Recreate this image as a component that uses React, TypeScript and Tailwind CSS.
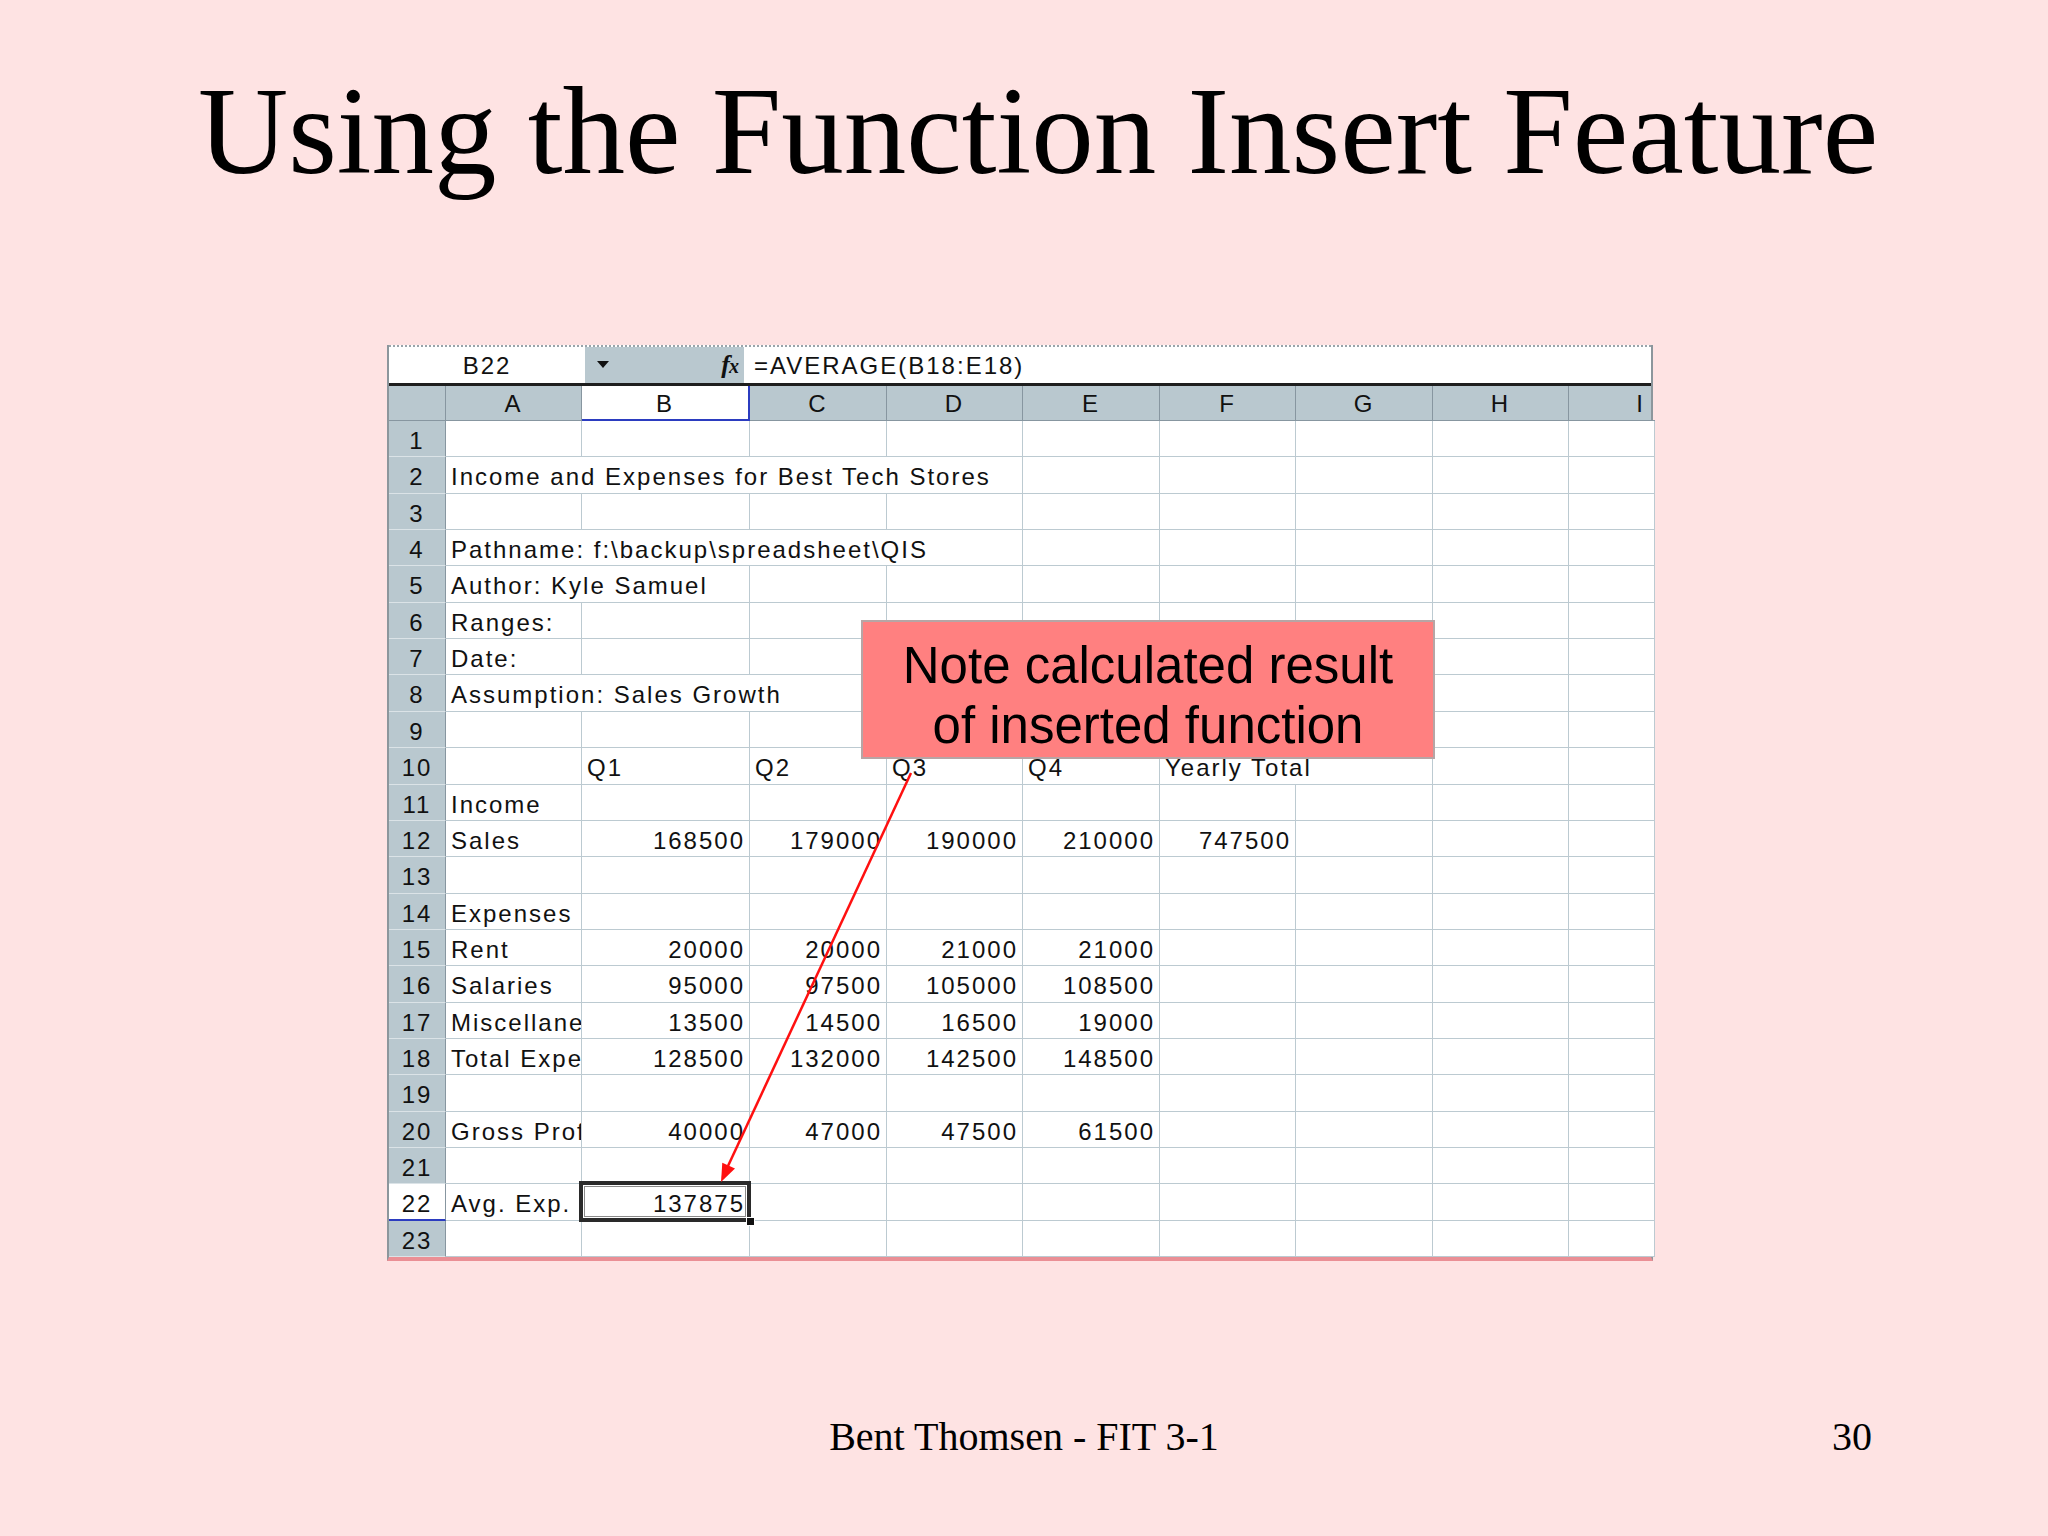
import React from "react";

type Cell = { t?: string; span?: number; num?: boolean };

const cols = ["A", "B", "C", "D", "E", "F", "G", "H", "I"];

const n = (t: string): Cell => ({ t, num: true });

// sheet contents, row number -> cells from column A
const data: Record<number, Cell[]> = {
  2: [{ t: "Income and Expenses for Best Tech Stores", span: 4 }],
  4: [{ t: "Pathname: f:\\backup\\spreadsheet\\QIS", span: 4 }],
  5: [{ t: "Author: Kyle Samuel", span: 2 }],
  6: [{ t: "Ranges:" }],
  7: [{ t: "Date:" }],
  8: [{ t: "Assumption: Sales Growth", span: 3 }],
  10: [{}, { t: "Q1" }, { t: "Q2" }, { t: "Q3" }, { t: "Q4" }, { t: "Yearly Total", span: 2 }],
  11: [{ t: "Income" }],
  12: [{ t: "Sales" }, n("168500"), n("179000"), n("190000"), n("210000"), n("747500")],
  14: [{ t: "Expenses" }],
  15: [{ t: "Rent" }, n("20000"), n("20000"), n("21000"), n("21000")],
  16: [{ t: "Salaries" }, n("95000"), n("97500"), n("105000"), n("108500")],
  17: [{ t: "Miscellaneous" }, n("13500"), n("14500"), n("16500"), n("19000")],
  18: [{ t: "Total Expenses" }, n("128500"), n("132000"), n("142500"), n("148500")],
  20: [{ t: "Gross Profit" }, n("40000"), n("47000"), n("47500"), n("61500")],
  22: [{ t: "Avg. Exp." }, n("137875")],
};

function fillRow(cells: Cell[] = []): Cell[] {
  const out = [...cells];
  let used = out.reduce((s, c) => s + (c.span ?? 1), 0);
  while (used < 9) {
    out.push({});
    used++;
  }
  return out;
}

// rows alternate 36/37px so 23 rows fill 836px on whole pixels
const rowTall = (num: number) => Math.round(num * 36.35) - Math.round((num - 1) * 36.35) > 36;

function SheetRow({ num }: { num: number }) {
  const cells = fillRow(data[num]);
  const active = num === 22;
  let col = 0;
  return (
    <div
      className={`grid grid-cols-[57px_136px_168px_137px_136px_137px_136px_137px_136px_86px] grid-rows-1 ${
        rowTall(num) ? "h-[37px]" : "h-[36px]"
      }`}
    >
      <div
        className={
          active
            ? "flex items-center justify-center pt-[4px] bg-white border-r border-[#8796a0] border-b-2 border-b-[#2b3cc0]"
            : "flex items-center justify-center pt-[4px] bg-[#b9c8cf] border-r border-[#8796a0] border-b border-b-[#dbe3e7]"
        }
      >
        {num}
      </div>
      {cells.map((c, i) => {
        const span = c.span ?? 1;
        const start = col;
        col += span;
        const selected = active && start === 1;
        return (
          <div
            key={i}
            style={span > 1 ? { gridColumn: `span ${span} / span ${span}` } : undefined}
            className={`relative flex items-center bg-white border-r border-b border-[#bccad1] whitespace-nowrap px-[5px] pt-[4px] ${
              c.num ? "justify-end pr-[4px]" : "justify-start"
            } ${selected ? "overflow-visible z-10" : "overflow-hidden"}`}
          >
            {c.t}
            {selected && (
              <>
                <div className="absolute -left-[3px] -top-[3px] -right-[2px] -bottom-[2px] border-[4px] border-[#2a2a2a] outline outline-1 -outline-offset-[6px] outline-[#8a8a8a]" />
                <div className="absolute -right-[6px] -bottom-[6px] w-[9px] h-[9px] bg-[#111] border border-white" />
              </>
            )}
          </div>
        );
      })}
    </div>
  );
}

function Spreadsheet() {
  return (
    <div className="relative w-[1266px] ml-[387px] self-start font-['Liberation_Sans',Arial,sans-serif] text-[24px] leading-[26px] tracking-[2px] text-[#111] border-l-2 border-r-2 border-[#8c969c] border-b-[4px] border-b-[#ea8f95] bg-white">
      {/* formula bar */}
      <div className="flex h-[38px] border-t-2 border-dotted border-[#9aa4aa]">
        <div className="w-[196px] flex items-center justify-center pt-[2px] bg-white">B22</div>
        <div className="w-[159px] flex items-center justify-between bg-[#b9c8cf] pl-[12px] pr-[6px]">
          <svg width="12" height="8" viewBox="0 0 12 8">
            <path d="M0 0 L12 0 L6 7 Z" fill="#111" />
          </svg>
          <span className="font-['Liberation_Serif',serif] italic font-bold text-[26px] tracking-[-1px] leading-none">
            f<span className="text-[20px]">x</span>
          </span>
        </div>
        <div className="flex-1 flex items-center bg-white pl-[10px] pt-[2px]">=AVERAGE(B18:E18)</div>
      </div>
      <div className="h-[3px] bg-[#1e1e1e]" />
      {/* column headers */}
      <div className="grid grid-cols-[57px_136px_168px_137px_136px_137px_136px_137px_136px_86px] grid-rows-1 h-[35px] bg-[#b9c8cf]">
        <div className="border-r border-[#8796a0] border-b border-b-[#8796a0]" />
        {cols.map((c) => (
          <div
            key={c}
            className={
              c === "B"
                ? "flex items-center justify-center pt-[2px] bg-white border-r-2 border-b-2 border-[#2b3cc0]"
                : c === "I"
                ? "flex items-center justify-end pt-[2px] pr-[10px] border-b border-[#8796a0]"
                : "flex items-center justify-center pt-[2px] border-r border-[#8796a0] border-b border-b-[#8796a0]"
            }
          >
            {c}
          </div>
        ))}
      </div>
      {Array.from({ length: 23 }, (_, i) => (
        <SheetRow key={i} num={i + 1} />
      ))}

      {/* arrow to the result cell */}
      <svg className="absolute left-0 top-0 pointer-events-none z-20" width="1266" height="920">
        <line x1="522" y1="428" x2="339" y2="821" stroke="#ff1010" strokeWidth="2.5" />
        <polygon points="332,837 346,823.6 333.3,817.8" fill="#ff1010" />
      </svg>

      {/* callout */}
      <div className="absolute z-20 left-[472px] top-[275px] w-[574px] h-[139px] bg-[#ff8080] border-2 border-[#b7a5a5] flex flex-col items-center pt-[14px] font-['Liberation_Sans',Arial,sans-serif] text-[51px] leading-[60px] tracking-normal text-black">
        <div>Note calculated result</div>
        <div>of inserted function</div>
      </div>
    </div>
  );
}

export default function App() {
  return (
    <div className="w-[2048px] h-[1536px] bg-[#fee3e3] flex flex-col overflow-hidden">
      <h1 className="pt-[69px] pl-[28px] h-[194px] text-center font-['Liberation_Serif','Times_New_Roman',serif] text-[125px] leading-[125px] text-black">
        Using the Function Insert Feature
      </h1>
      <div className="mt-[151px]">
        <Spreadsheet />
      </div>
      <div className="mt-[156px] grid grid-cols-[1fr_auto_1fr] font-['Liberation_Serif','Times_New_Roman',serif] text-[40px] leading-[40px] text-black">
        <div />
        <div>Bent Thomsen - FIT 3-1</div>
        <div className="text-right pr-[176px]">30</div>
      </div>
    </div>
  );
}
